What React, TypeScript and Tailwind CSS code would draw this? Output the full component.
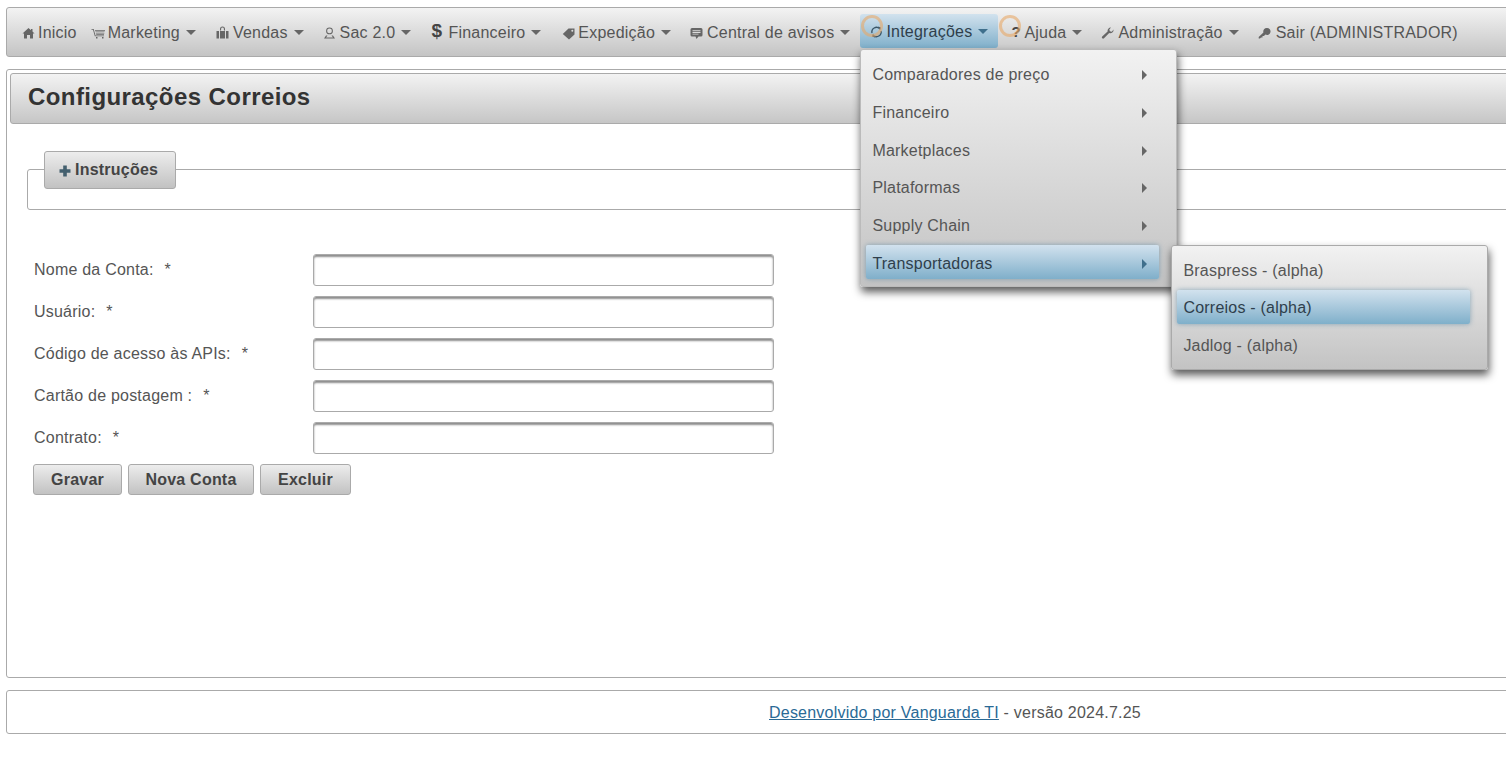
import React from "react";

const Ico = ({ children, box, w = 14 }: { children: React.ReactNode; box: string; w?: number }) => (
  <span className={`flex items-center shrink-0 ${box}`}>
    <svg width={w} height={14} viewBox={`0 0 ${w} 14`} fill="#666" stroke="none">
      {children}
    </svg>
  </span>
);

const Caret = ({ dark }: { dark?: boolean }) => (
  <span
    className={
      dark
        ? "ml-[6px] w-0 h-0 border-x-[5px] border-t-[5px] border-x-transparent border-t-[#3f6f8c] shrink-0"
        : "ml-[6px] w-0 h-0 border-x-[5px] border-t-[5px] border-x-transparent border-t-[#666] shrink-0"
    }
  />
);

const Arrow = () => (
  <span className="w-0 h-0 border-y-[5px] border-l-[5px] border-y-transparent border-l-[#666] shrink-0" />
);

const Ring = ({ className }: { className: string }) => (
  <span className={`absolute w-[22px] h-[22px] rounded-full border-[3px] border-[#e8a868]/60 ${className}`} />
);

const fields = ["Nome da Conta:", "Usuário:", "Código de acesso às APIs:", "Cartão de postagem :", "Contrato:"];
const menu = ["Comparadores de preço", "Financeiro", "Marketplaces", "Plataformas", "Supply Chain"];

const grayBtn =
  "rounded-[3px] border border-[#aaa] bg-gradient-to-b from-[#ededed] to-[#c2c2c2] font-bold text-[#444] text-[16px]";
const activeGrad = "bg-gradient-to-b from-[#d2e2ee] to-[#7fafca] text-[#2f3f4c]";

export default function App() {
  return (
    <div
      className="relative w-[1506px] h-[758px] overflow-hidden bg-white text-[16px] text-[#555] tracking-[0.22px]"
      style={{ fontFamily: '"Liberation Sans", Arial, sans-serif' }}
    >
      <div className="w-[1898px] ml-[6px] pt-[7px]">
        {/* Nav */}
        <nav className="flex items-center h-[50px] pl-[15px] pt-[1px] rounded-[3px] border border-[#aaa] bg-gradient-to-b from-[#f3f3f3] to-[#c4c4c4]">
          <div className="flex items-center">
            <Ico box="w-[16px]" w={13}>
              <path d="M6.5 2 L0.5 7.5 H2 V12.5 H5 V9 H8 V12.5 H11 V7.5 H12.5 L10.5 5.6 V3 H9 V4.2 Z" />
            </Ico>
            <span>Inicio</span>
          </div>
          <div className="flex items-center ml-[14px]">
            <Ico box="w-[17px]" w={15}>
              <path d="M0.5 3h2.2l1.8 6.5h8.5v.8H3.8L2 3.8H.5z M4 4h10v.7H4z M4.4 5.4h9.2v.7H4.4z M4.8 6.8h8.5v.7H4.8z M5.2 8.2h7.8v.7H5.2z M5 11h1.5v1.5H5z M11 11h1.5v1.5H11z" />
            </Ico>
            <span>Marketing</span>
            <Caret />
          </div>
          <div className="flex items-center ml-[20px]">
            <Ico box="w-[17px]" w={13}>
              <path d="M4 4.5V3a2.5 2.5 0 0 1 5 0v1.5H7.9V3a1.4 1.4 0 0 0-2.8 0v1.5z M0.5 5h2.5v7.5H.5z M4 5h5v7.5H4z M10 5h2.5v7.5H10z" />
            </Ico>
            <span>Vendas</span>
            <Caret />
          </div>
          <div className="flex items-center ml-[19px]">
            <Ico box="w-[17px]" w={13}>
              <path fillRule="evenodd" d="M6.5 1.5a3.2 3.2 0 1 1 0 6.8 3.2 3.2 0 0 1 0-6.8z M6.5 2.5a2.2 2.2 0 1 0 0 4.8 2.2 2.2 0 0 0 0-4.8z" />
              <path d="M1 12.5 L3 9.5 H4.5 L3 11.6 H10 L8.5 9.5 H10 L12 12.5z" />
            </Ico>
            <span>Sac 2.0</span>
            <Caret />
          </div>
          <div className="flex items-center ml-[20px]">
            <span className="w-[17px] text-[19px] font-bold leading-none text-[#444] -mt-[5px] shrink-0">$</span>
            <span>Financeiro</span>
            <Caret />
          </div>
          <div className="flex items-center ml-[21px]">
            <Ico box="w-[16px]" w={13}>
              <path fillRule="evenodd" d="M6.5 2.5H12.5V8.5L7 13.5 0.8 8z M10.3 3.8a1 1 0 1 0 0 2 1 1 0 0 0 0-2z" />
            </Ico>
            <span>Expedição</span>
            <Caret />
          </div>
          <div className="flex items-center ml-[19px]">
            <Ico box="w-[17px]" w={13}>
              <path fillRule="evenodd" d="M2 2H11a1.5 1.5 0 0 1 1.5 1.5V9A1.5 1.5 0 0 1 11 10.5H8.5L6.5 13 5.5 10.5H2A1.5 1.5 0 0 1 .5 9V3.5A1.5 1.5 0 0 1 2 2z M2.5 4.3v.9h8v-.9z M2.5 6v.9h8V6z M2.5 7.7v.9h6v-.9z" />
            </Ico>
            <span>Central de avisos</span>
            <Caret />
          </div>
          <div className={`relative flex items-center h-[34px] ml-[10px] pl-[10px] pr-[10px] pt-[1px] -mt-[3px] rounded-[3px] ${activeGrad}`}>
            <Ring className="left-[1px] top-[1px]" />
            <Ico box="w-[16px]" w={13}>
              <g fill="none" stroke="#3a5668" strokeWidth="1.4">
                <path d="M2 8A4.6 4.6 0 0 1 9.6 3.6" />
                <path d="M11 6A4.6 4.6 0 0 1 3.4 10.4" />
              </g>
              <path d="M8 1.5L11 2.5 10 5.5z M5 12.5L2 11.5 3 8.5z" fill="#3a5668" />
            </Ico>
            <span>Integrações</span>
            <Caret dark />
            {/* Dropdown */}
            <div className="absolute left-0 top-[35px] z-10 w-[317px] h-[238px] pt-[6px] pl-[5px] rounded-[3px] border border-[#bbb] bg-gradient-to-b from-[#f2f2f2] to-[#c3c3c3] text-[#555] shadow-[1px_5px_9px_rgba(0,0,0,0.65)]">
              <div className="flex flex-col gap-[3.8px] w-[293px]">
                {menu.map((m) => (
                  <div key={m} className="flex items-center justify-between h-[34px] pl-[6px] pr-[12px] pt-[4px]">
                    <span>{m}</span>
                    <Arrow />
                  </div>
                ))}
                <div className={`flex items-center justify-between h-[34px] pl-[6px] pr-[12px] pt-[4px] rounded-[2px] shadow-[0_0_5px_rgba(80,130,160,0.6)] ${activeGrad}`}>
                  <span>Transportadoras</span>
                  <span className="w-0 h-0 border-y-[5px] border-l-[5px] border-y-transparent border-l-[#3f6f8c] shrink-0" />
                </div>
              </div>
              {/* Submenu */}
              <div className="absolute left-[310px] top-[195px] w-[317px] h-[125px] pt-[6px] pl-[5px] rounded-[3px] border border-[#aaa] bg-gradient-to-b from-[#f2f2f2] to-[#c3c3c3] shadow-[1px_5px_9px_rgba(0,0,0,0.65)]">
                <div className="flex flex-col gap-[3.5px] w-[293px]">
                  <div className="flex items-center h-[34px] pl-[6px] pt-[4px]">Braspress - (alpha)</div>
                  <div className={`flex items-center h-[34px] pl-[6px] pt-[2px] rounded-[2px] shadow-[0_0_5px_rgba(80,130,160,0.6)] ${activeGrad}`}>
                    Correios - (alpha)
                  </div>
                  <div className="flex items-center h-[34px] pl-[6px] pt-[4px]">Jadlog - (alpha)</div>
                </div>
              </div>
            </div>
          </div>
          <div className="relative flex items-center ml-[13px]">
            <Ring className="-left-[12px] -top-[6px]" />
            <span className="w-[13px] font-bold text-[#444] shrink-0 text-[15px]">?</span>
            <span>Ajuda</span>
            <Caret />
          </div>
          <div className="flex items-center ml-[19px]">
            <Ico box="w-[17px]" w={13}>
              <path d="M12.5 3.5a3.2 3.2 0 0 1-4.3 3.5L3 12.3a1.2 1.2 0 0 1-1.8-1.7L6.6 5.4A3.2 3.2 0 0 1 10 1.6L8.3 3.4l.6 1.9 1.9.5z" />
            </Ico>
            <span>Administração</span>
            <Caret />
          </div>
          <div className="flex items-center ml-[19px]">
            <Ico box="w-[18px]" w={13}>
              <path fillRule="evenodd" d="M9 2a3.5 3.5 0 1 1-1.6 6.6L6 10H4.5v1.5H3L2 12.5H.7V11L5.4 6.4A3.5 3.5 0 0 1 9 2z" />
            </Ico>
            <span>Sair (ADMINISTRADOR)</span>
          </div>
        </nav>

        {/* Main panel */}
        <main className="mt-[12px] h-[609px] p-[3px] rounded-[3px] border border-[#aaa]">
          <div className="flex items-center h-[51px] pl-[17px] pb-[4px] rounded-[3px] border border-[#aaa] bg-gradient-to-b from-[#f3f3f3] to-[#c6c6c6]">
            <h1 className="text-[24px] font-bold text-[#333] tracking-[0.42px]">Configurações Correios</h1>
          </div>

          <fieldset className="relative mt-[45px] ml-[17px] mr-[4px] h-[41px] rounded-[3px] border border-[#aaa]">
            <button className={`absolute left-[16px] -top-[19px] flex items-center w-[132px] h-[38px] pl-[14px] ${grayBtn}`}>
              <svg width="12" height="12" viewBox="0 0 12 12" fill="#44606f" className="mr-[4px] mt-[2px]">
                <path d="M4.2 0.5h3.6v3.7h3.7v3.6H7.8v3.7H4.2V7.8H0.5V4.2h3.7z" />
              </svg>
              Instruções
            </button>
          </fieldset>

          <form className="mt-[44px] ml-[23px]">
            <div className="flex flex-col gap-[10px]">
              {fields.map((f) => (
                <div key={f} className="flex items-center h-[32px]">
                  <label className="w-[280px] shrink-0 pl-[1px]">
                    {f}
                    <span className="ml-[11px]">*</span>
                  </label>
                  <input
                    type="text"
                    className="w-[461px] h-[32px] rounded-[3px] border border-[#aaa] bg-white shadow-[inset_0_2px_2px_rgba(0,0,0,0.45)]"
                  />
                </div>
              ))}
            </div>
            <div className="flex gap-[6px] mt-[10px]">
              <button type="button" className={`w-[89px] h-[31px] ${grayBtn}`}>Gravar</button>
              <button type="button" className={`w-[126px] h-[31px] ${grayBtn}`}>Nova Conta</button>
              <button type="button" className={`w-[91px] h-[31px] ${grayBtn}`}>Excluir</button>
            </div>
          </form>
        </main>

        {/* Footer */}
        <footer className="flex items-center justify-center mt-[12px] h-[44px] pt-[1px] rounded-[3px] border border-[#aaa]">
          <a className="text-[#2a6a96] underline">Desenvolvido por Vanguarda TI</a>
          <span className="whitespace-pre"> - versão 2024.7.25</span>
        </footer>
      </div>
    </div>
  );
}
